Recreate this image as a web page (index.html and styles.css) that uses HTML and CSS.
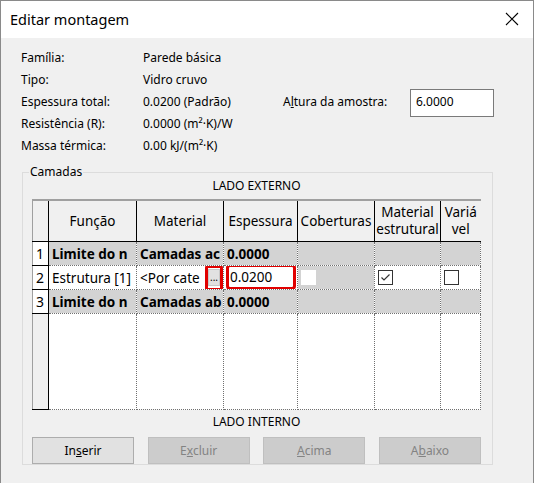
FILE: index.html
```html
<!DOCTYPE html>
<html>
<head>
<meta charset="utf-8">
<link rel="stylesheet" href="styles.css">
</head>
<body>
<div class="window">
  <div class="titlebar">
    <span class="title">Editar montagem</span>
    <svg class="close" width="14" height="14" viewBox="0 0 14 14"><path d="M1 1 L13 13 M13 1 L1 13" stroke="#000" stroke-width="1.1" fill="none"/></svg>
  </div>
  <div class="body">
    <div class="info">
      <span>Família:</span><span>Parede básica</span><span></span><span></span>
      <span>Tipo:</span><span>Vidro cruvo</span><span></span><span></span>
      <span>Espessura total:</span><span>0.0200 (Padrão)</span><span>A<u>l</u>tura da amostra:</span><span class="inputbox">6.0000</span>
      <span>Resistência (R):</span><span>0.0000 (m²·K)/W</span><span></span><span></span>
      <span>Massa térmica:</span><span>0.00 kJ/(m²·K)</span><span></span><span></span>
    </div>
    <fieldset class="group">
      <legend>Camadas</legend>
      <div class="side">LADO EXTERNO</div>
      <table class="grid">
        <colgroup>
          <col class="c0"><col class="c1"><col class="c2"><col class="c3"><col class="c4"><col class="c5"><col class="c6">
        </colgroup>
        <thead>
          <tr>
            <th class="rn"></th><th>Função</th><th>Material</th><th>Espessura</th><th>Coberturas</th><th>Material<br>estrutural</th><th>Variá<br>vel</th>
          </tr>
        </thead>
        <tbody>
          <tr class="gray bold">
            <td class="rn">1</td><td>Limite do n</td><td>Camadas ac</td><td>0.0000</td><td></td><td></td><td></td>
          </tr>
          <tr>
            <td class="rn">2</td><td>Estrutura [1]</td>
            <td class="mat"><div class="matwrap"><span class="mtext">&lt;Por cate</span><span class="dots-hl"><span class="dots">...</span></span></div></td>
            <td class="esp"><div class="hl">0.0200</div></td>
            <td class="graycell"><span class="cb-dis"></span></td>
            <td><span class="cb"><svg width="13" height="13" viewBox="0 0 13 13"><path d="M2.5 6.5 L5 9 L10.5 3.5" stroke="#333" stroke-width="1.2" fill="none"/></svg></span></td>
            <td><span class="cb"></span></td>
          </tr>
          <tr class="gray bold">
            <td class="rn">3</td><td>Limite do n</td><td>Camadas ab</td><td>0.0000</td><td></td><td></td><td></td>
          </tr>
          <tr class="empty">
            <td class="rn blank"></td><td></td><td></td><td></td><td></td><td></td><td></td>
          </tr>
        </tbody>
      </table>
      <div class="side inner">LADO INTERNO</div>
      <div class="buttons">
        <button class="btn">In<u>s</u>erir</button>
        <button class="btn dis">E<u>x</u>cluir</button>
        <button class="btn dis"><u>A</u>cima</button>
        <button class="btn dis">A<u>b</u>aixo</button>
      </div>
    </fieldset>
  </div>
</div>
</body>
</html>
```

FILE: styles.css
```css
html, body {
  margin: 0;
  padding: 0;
  background: #f0f0f0;
}
body {
  font-family: "Noto Sans", "Liberation Sans", sans-serif;
  font-size: 12px;
  color: #000;
}
.window {
  width: 534px;
  height: 483px;
  box-sizing: border-box;
  border: 1px solid #8a8a8a;
  border-bottom: none;
  background: #f0f0f0;
  overflow: hidden;
}
.titlebar {
  height: 37px;
  background: #fff;
  display: flex;
  align-items: center;
  justify-content: space-between;
  padding: 0 14px 0 9px;
}
.title {
  font-size: 14.5px;
  margin-top: -1px;
}
.close {
  display: block;
  margin-top: -1px;
}
.body {
  padding: 8px 0 0 20px;
}
.info {
  display: grid;
  grid-template-columns: 122px 140px 127px 84px;
  grid-auto-rows: 22px;
  align-items: center;
}
.inputbox {
  box-sizing: border-box;
  height: 28px;
  border: 1px solid #7a7a7a;
  background: #fff;
  padding: 4px 5px;
  margin-top: 4px;
  line-height: 16px;
}
.group {
  margin: 9px 0 0 1px;
  width: 471px;
  height: 300px;
  box-sizing: border-box;
  border: 1px solid #dcdcdc;
  padding: 0 11px 0 9px;
}
.group legend {
  padding: 0 1px;
  margin-left: -3px;
  line-height: 14px;
}
.side {
  text-align: center;
  line-height: 14px;
  margin: 0 0 6px 0;
}
.side.inner {
  margin: 5px 0 8px 0;
}
.grid {
  border-collapse: collapse;
  table-layout: fixed;
  width: 448px;
  background: #fff;
  border-top: 2px solid #a0a0a0;
  border-left: 1px solid #a0a0a0;
  font-size: 13.5px;
}
.c0 { width: 16px; }
.c1 { width: 88px; }
.c2 { width: 87px; }
.c3 { width: 74px; }
.c4 { width: 77px; }
.c5 { width: 66px; }
.c6 { width: 40px; }
.grid th {
  background: #f0f0f0;
  font-weight: normal;
  height: 40px;
  border-left: 1px solid #000;
  border-bottom: 1px solid #000;
  padding: 0;
  line-height: 17px;
  text-align: center;
  color: #000;
  white-space: nowrap;
}
.grid th.rn {
  background: #f0f0f0;
  border-left: none;
}
.grid td {
  height: 23px;
  padding: 0 3px;
  border: 1px dotted #707070;
  border-top: none;
  white-space: nowrap;
  overflow: hidden;
  line-height: 22px;
}
.grid td.rn {
  border: none;
  border-right: 1px solid #000;
  border-bottom: 1px solid #000;
  background: #fff;
  padding: 0 0 0 3px;
  font-weight: normal;
  font-size: 14px;
}
.grid td.rn.blank {
  background: #f0f0f0;
  border-bottom: 1px solid #000;
}
.gray td {
  background: #d3d3d3;
}
.bold td {
  font-weight: bold;
}
.empty td {
  height: 95px;
}
.grid td.graycell {
  background: #d3d3d3;
}
.grid td.mat {
  padding: 0 0 0 3px;
}
.matwrap {
  display: flex;
  align-items: center;
  height: 23px;
}
.mtext {
  flex: 1;
  overflow: hidden;
  white-space: nowrap;
}
.dots-hl {
  box-sizing: border-box;
  width: 18px;
  height: 26px;
  margin: -2px 0 -2px 0;
  border: 3px solid #e10000;
  border-radius: 3px;
  display: flex;
  align-items: center;
  justify-content: center;
}
.dots {
  display: block;
  width: 12px;
  height: 17px;
  background: #e1e1e1;
  border: 1px solid #c8c8c8;
  font-size: 10px;
  line-height: 14px;
  text-align: center;
  box-sizing: border-box;
}
.grid td.esp {
  padding: 0 1px 0 2px;
}
.hl {
  box-sizing: border-box;
  height: 26px;
  margin: -2px 0 -1px 0;
  border: 3px solid #e10000;
  border-radius: 4px;
  line-height: 20px;
  padding-left: 1px;
}
.cb, .cb-dis {
  display: inline-block;
  box-sizing: border-box;
  width: 15px;
  height: 15px;
  vertical-align: middle;
  margin-top: -2px;
  margin-left: 0;
}
.cb {
  border: 1px solid #333;
  background: #fff;
}
.cb svg {
  display: block;
  margin: 0;
}
.cb-dis {
  background: #fff;
}
.buttons {
  display: flex;
  justify-content: space-between;
  width: 449px;
}
.btn {
  width: 102px;
  height: 27px;
  font-family: "Noto Sans", "Liberation Sans", sans-serif;
  font-size: 12px;
  background: #e1e1e1;
  border: 1px solid #adadad;
  color: #000;
  padding: 0;
}
.btn.dis {
  background: #cccccc;
  border-color: #bfbfbf;
  color: #838383;
}
```
